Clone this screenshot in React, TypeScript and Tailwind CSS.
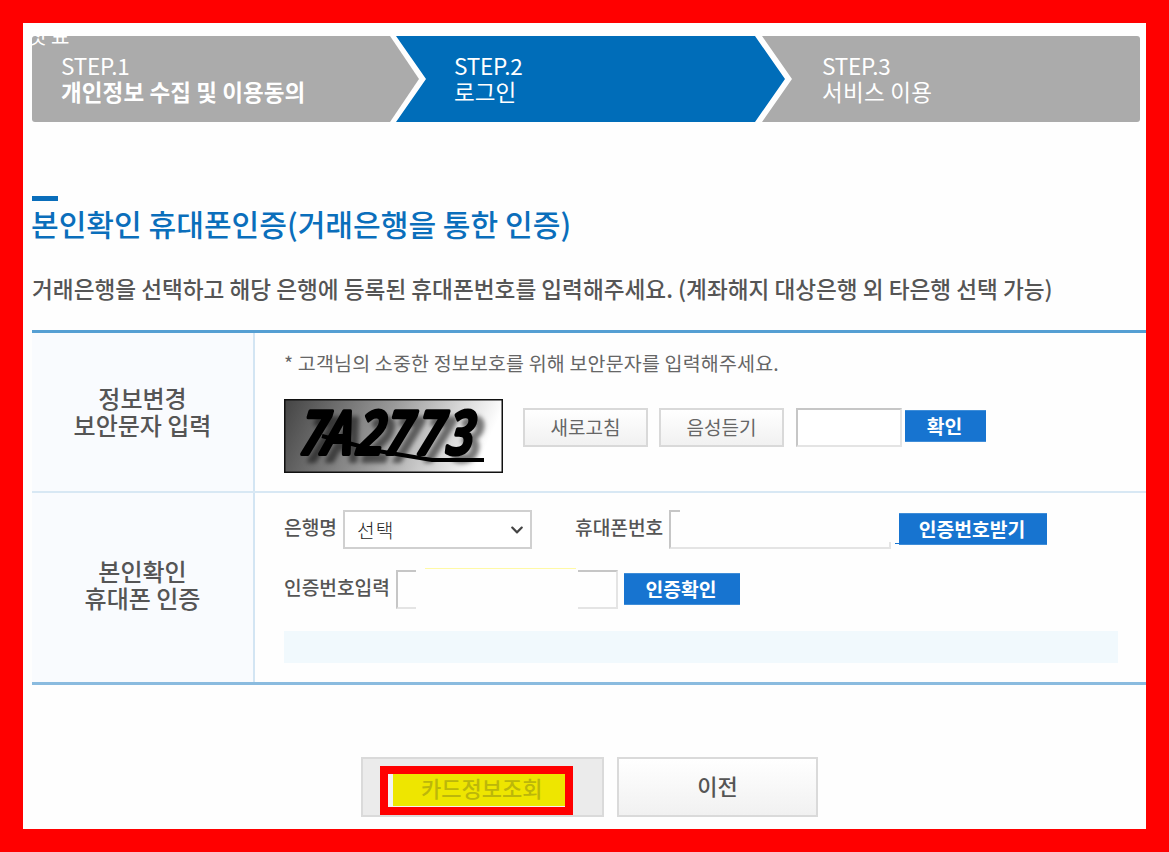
import { ReactNode } from "react";
import { FaChevronDown } from "react-icons/fa";

const steps = [
    { step: "STEP.1", nome: "개인정보 수집 및 이용동의", css: "w-[387px] pl-[29px] bg-[#ababab] rounded-l-[3px] [clip-path:polygon(0_0,358px_0,100%_50%,358px_100%,0_100%)]", nomeCss: "font-bold tracking-[0.1px]" },
    { step: "STEP.2", nome: "로그인", css: "w-[389px] -ml-[23px] pl-[58px] bg-[#006db9] [clip-path:polygon(0_0,359px_0,100%_50%,359px_100%,0_100%,30px_50%)]", nomeCss: "" },
    { step: "STEP.3", nome: "서비스 이용", css: "w-[378px] -ml-[23px] pl-[60px] bg-[#ababab] rounded-r-[3px] [clip-path:polygon(0_0,100%_0,100%_100%,0_100%,30px_50%)]", nomeCss: "tracking-[0.3px]" },
];

function Steps() {
    return (
        <div className="flex h-[86px]">
            {steps.map((item) => (
                <div key={item.step} className={`flex flex-col pt-[16px] text-white text-[22.5px] leading-[26px] ${item.css}`}>
                    <span className="tracking-[-0.2px]">{item.step}</span>
                    <span className={item.nomeCss}>{item.nome}</span>
                </div>
            ))}
        </div>
    )
}

function Captcha() {
    return (
        <svg className="shrink-0" width="219" height="74" viewBox="0 0 219 74">
            <defs>
                <linearGradient id="fundo" x1="0" y1="0" x2="1" y2="0.15">
                    <stop offset="0" stopColor="#444" />
                    <stop offset="0.5" stopColor="#999" />
                    <stop offset="1" stopColor="#fff" />
                </linearGradient>
                <filter id="sombra" x="-20%" y="-20%" width="140%" height="140%">
                    <feDropShadow dx="7" dy="7" stdDeviation="2" floodColor="#000" floodOpacity="0.5" />
                </filter>
            </defs>
            <rect x="0.75" y="0.75" width="217.5" height="72.5" fill="url(#fundo)" stroke="#111" strokeWidth="1.5" />
            <g filter="url(#sombra)">
                <text
                    transform="translate(0 55) skewX(-7) scale(0.82 1)"
                    x="18 47 88 122 160 197"
                    y="0"
                    fontFamily="'Open Sans', sans-serif"
                    fontStyle="italic"
                    fontWeight="600"
                    fontSize="60"
                    stroke="#000"
                    strokeWidth="4"
                    strokeLinejoin="round"
                >7A2773</text>
            </g>
            <path d="M38 37 L94 52 L148 61 H200" fill="none" stroke="#000" strokeWidth="4" />
        </svg>
    )
}

function BlueBtn({ nome, css }: { nome: string, css: string }) {
    return (
        <button className={`flex shrink-0 items-center justify-center bg-[#1774d0] border-y border-[#3f8dd8] pb-px pr-[2px] font-bold text-white text-[19.3px] leading-[28px] ${css}`}>{nome}</button>
    )
}

function GrayBtn({ nome }: { nome: string }) {
    return (
        <button className="flex h-[39px] w-[125px] shrink-0 items-center justify-center border-2 border-[#d9d9d9] bg-linear-to-b from-white to-[#f1f1f1] pb-px text-[19px] leading-[28px] text-[#666]">{nome}</button>
    )
}

function Linha({ titulo, css, children }: { titulo: string, css: string, children: ReactNode }) {
    return (
        <div className={`flex ${css}`}>
            <div className="flex w-[223px] shrink-0 items-center justify-center border-r-2 border-[#d3e5f3] bg-[#f9fbfe] pb-[3px] text-center text-[24px] leading-[27px] font-medium whitespace-pre-line text-[#555]">
                {titulo}
            </div>
            <div className="flex grow flex-col pl-[29px]">{children}</div>
        </div>
    )
}

export default function App() {
    return (
        <div className="relative h-[852px] w-[1169px] overflow-hidden border-[23px] border-[#ff0000] bg-[#fefefe] pl-[9px] pt-[13px] font-['Noto_Sans_CJK_KR',sans-serif] whitespace-nowrap">
            <Steps />
            <span className="absolute left-[5px] top-px text-[20px] leading-[24px] text-white">첫 표</span>

            <div className="mt-[74px] h-[5px] w-[26px] bg-[#0a6ebb]"></div>
            <h1 className="mt-px -ml-px text-[30.1px] leading-[42px] font-medium text-[#0a6ebb]">본인확인 휴대폰인증(거래은행을 통한 인증)</h1>
            <p className="mt-[28px] text-[22.63px] leading-[34px] font-medium text-[#555]">
                거래은행을 선택하고 해당 은행에 등록된 휴대폰번호를 입력해주세요. (계좌해지 대상은행 외 타은행 선택 가능)
            </p>

            <div className="mt-[24px] border-t-3 border-b-3 border-t-[#559fd3] border-b-[#8abbdf]">
                <Linha titulo={"정보변경\n보안문자 입력"} css="h-[160px] border-b-2 border-[#d8e8f4]">
                    <p className="mt-[16px] text-[19.5px] leading-[28px] tracking-[0.17px] text-[#666]">* 고객님의 소중한 정보보호를 위해 보안문자를 입력해주세요.</p>
                    <div className="mt-[22px] flex items-start">
                        <Captcha />
                        <div className="ml-[20px] mt-[9px] flex items-start gap-[11px]">
                            <GrayBtn nome="새로고침" />
                            <GrayBtn nome="음성듣기" />
                            <input className="ml-[1px] h-[39px] w-[106px] border-2 border-[#c6c6c6] border-r-[#e4e4e4] border-b-[#e4e4e4] bg-white" />
                        </div>
                        <BlueBtn nome="확인" css="ml-[3px] mt-[11px] h-[32px] w-[81px]" />
                    </div>
                </Linha>
                <Linha titulo={"본인확인\n휴대폰 인증"} css="h-[189px] *:first:pb-[7px]">
                    <div className="mt-[17px] flex items-start text-[19.2px] leading-[34px] font-medium text-[#555]">
                        <span className="w-[59px]">은행명</span>
                        <div className="flex h-[39px] w-[189px] items-center justify-between border-2 border-[#d0d0d0] bg-white pl-[12px] pr-[6px] font-light tracking-[1px] text-[#222]">
                            선택
                            <FaChevronDown size={14} color="#444" />
                        </div>
                        <span className="ml-[43px] w-[94px]">휴대폰번호</span>
                        <div className="flex h-[39px] w-[222px] justify-between border-b-2 border-l-2 border-b-[#e4e4e4] border-l-[#c6c6c6]">
                            <div className="h-[2px] w-[9px] bg-[#c6c6c6]"></div>
                            <div className="h-[5px] w-[2px] self-end bg-[#e4e4e4]"></div>
                        </div>
                        <div className="ml-[4px] mt-[33px] h-px w-[4px] bg-[#1774d0]"></div>
                        <BlueBtn nome="인증번호받기" css="mt-[3px] h-[32px] w-[148px]" />
                    </div>
                    <div className="mt-[19px] flex h-[41px] items-start text-[19.2px] leading-[34px] font-medium text-[#555]">
                        <span className="mt-[2px] w-[112px]">인증번호입력</span>
                        <div className="mt-[2px] h-[39px] w-[20px] border-2 border-r-0 border-[#c6c6c6] border-b-[#e4e4e4]"></div>
                        <div className="ml-[9px] h-px w-[151px] bg-[#fff9a6]"></div>
                        <div className="ml-[2px] mt-[2px] h-[39px] w-[40px] border-2 border-l-0 border-[#e4e4e4] border-t-[#c6c6c6]"></div>
                        <BlueBtn nome="인증확인" css="ml-[6px] mt-[5px] h-[32px] w-[116px]" />
                    </div>
                    <div className="mt-[22px] h-[32px] w-[834px] bg-[#f1f9fd]"></div>
                </Linha>
            </div>

            <div className="ml-[329px] mt-[72px] flex gap-[13px] text-[22px] leading-[32px] font-medium">
                <div className="h-[60px] w-[243px] border-2 border-[#dadada] bg-[#ebebeb] pl-[17px] pt-[7px]">
                    {/* marcação em vermelho do botão */}
                    <div className="flex h-[49px] w-[193px] border-8 border-[#ff0000] bg-[#f3f3f3] pl-[5px]">
                        <button className="flex h-[32px] w-full items-center bg-[#eee600] pl-[28px] leading-[26px] text-[#bcb70a] pb-[6px]">카드정보조회</button>
                    </div>
                </div>
                <button className="h-[60px] w-[201px] border-2 border-[#dadada] bg-linear-to-b from-white to-[#f1f1f1] pb-[4px] text-[#555]">이전</button>
            </div>
        </div>
    )
}
